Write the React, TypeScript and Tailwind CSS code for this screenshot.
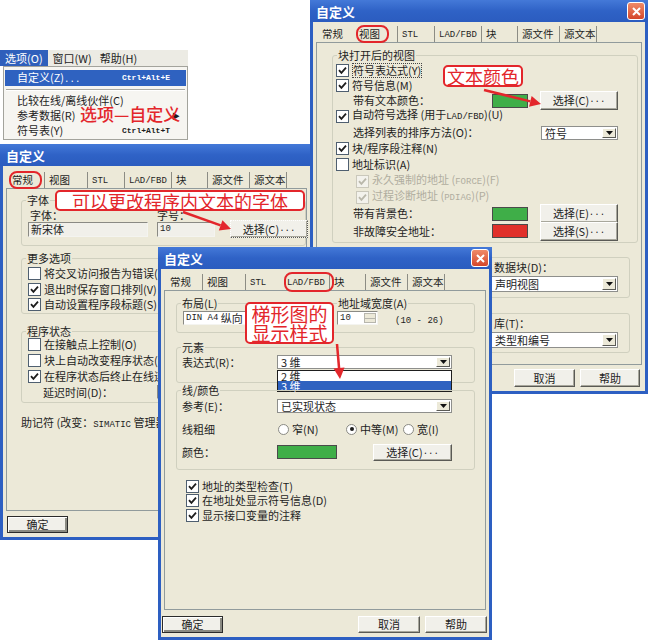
import React from 'react';

type P = { children?: React.ReactNode; className?: string };

const RED = '#e3262b';

// Latin runs in the dialogs look like a bitmap mono face
function M({ children, className = 'text-[9px]' }: P) {
  return <span className={`[font-family:'Liberation_Mono',monospace] ${className}`}>{children}</span>;
}

function TitleBar({ close = false }: { close?: boolean }) {
  return (
    <div className="flex h-[22px] shrink-0 items-center justify-between bg-gradient-to-b from-[#4479d8] via-[#2f62c6] to-[#2b5cbf] pl-[6px] pr-[3px]">
      <span className="text-[13px] font-bold leading-none text-white">自定义</span>
      {close && (
        <span className="flex h-[18px] w-[18px] items-center justify-center rounded-[3px] border border-white bg-gradient-to-b from-[#ef8a68] to-[#d4452a]">
          <svg width="9" height="9" viewBox="0 0 9 9">
            <path d="M1 1L8 8M8 1L1 8" stroke="#fff" strokeWidth="2" />
          </svg>
        </span>
      )}
    </div>
  );
}

const TABS = ['常规', '视图', 'STL', 'LAD/FBD', '块', '源文件', '源文本'];
const TW = ['w-[37px]', 'w-[43px]', 'w-[37px]', 'w-[47px]', 'w-[36px]', 'w-[42px]', 'w-[37px]'];

function Tabs({ sel, className = '' }: { sel: number; className?: string }) {
  return (
    <div className={`flex shrink-0 items-end pl-[5px] text-[10.5px] ${className}`}>
      {TABS.map((t, i) => (
        <div
          key={t}
          className={`flex h-[16px] items-center whitespace-nowrap pl-[4px] ${TW[i]} ${i === sel - 1 ? '' : 'border-r border-[#8c8c84]'}`}
        >
          <span className="relative leading-none">
            {t === 'STL' || t === 'LAD/FBD' ? <M>{t}</M> : t}
            {i === sel && (
              <span className="absolute -bottom-[4px] -left-[3px] -right-[9px] -top-[4px] rounded-[8px] border-2 border-[#e3262b]" />
            )}
          </span>
        </div>
      ))}
    </div>
  );
}

function Group({ label, label2, className = '', children }: P & { label?: string; label2?: React.ReactNode }) {
  return (
    <div className={`relative shrink-0 rounded-[3px] border border-[#d0d0bf] ${className}`}>
      {label && <span className="absolute -top-[7px] left-[4px] bg-[#ece9d8] px-[1px] leading-[13px]">{label}</span>}
      {label2}
      {children}
    </div>
  );
}

function Chk({ on = false, dis = false }: { on?: boolean; dis?: boolean }) {
  return (
    <span
      className={`flex h-[13px] w-[13px] shrink-0 items-center justify-center border ${dis ? 'border-[#cac8bb] bg-[#f3f2ec]' : 'border-[#4f5f70] bg-white'}`}
    >
      {on && (
        <svg width="9" height="9" viewBox="0 0 9 9">
          <path d="M1 4.2L3.4 6.8L8 1.6" fill="none" stroke={dis ? '#b9b7aa' : '#1d1d1d'} strokeWidth="1.8" />
        </svg>
      )}
    </span>
  );
}

function CRow({
  on,
  dis,
  focus,
  children,
  className = '',
}: P & { on?: boolean; dis?: boolean; focus?: boolean }) {
  return (
    <div className={`flex shrink-0 items-center gap-[3px] ${className}`}>
      <Chk on={on} dis={dis} />
      <span
        className={`whitespace-nowrap leading-[13px] ${dis ? 'text-[#b0ad9f]' : ''} ${focus ? 'border border-dotted border-[#444]' : ''}`}
      >
        {children}
      </span>
    </div>
  );
}

function Btn({ children, className = '', def = false }: P & { def?: boolean }) {
  return (
    <div
      className={`flex shrink-0 items-center justify-center whitespace-nowrap border ${def ? 'border-[#2b2b2b] shadow-[inset_1px_1px_0_#fff,inset_-2px_-2px_0_#8a8a82]' : 'border-b-[#5a5a55] border-l-white border-r-[#5a5a55] border-t-white shadow-[inset_-1px_-1px_0_#a8a79c]'} bg-[#f1f0ea] leading-none ${className}`}
    >
      {children}
    </div>
  );
}

function Combo({ value, className = '', pl = 'pl-[3px]', children }: P & { value: string; pl?: string }) {
  return (
    <div className={`relative flex shrink-0 items-center border border-[#8e8f8c] bg-white ${className}`}>
      <span className={`flex-1 whitespace-nowrap leading-[12px] ${pl}`}>{value}</span>
      <span className="m-px flex h-[calc(100%-2px)] w-[14px] items-center justify-center border border-b-[#5a5a55] border-l-white border-r-[#5a5a55] border-t-white bg-[#ece9d8]">
        <svg width="7" height="4" viewBox="0 0 7 4">
          <path d="M0 0H7L3.5 4Z" fill="#111" />
        </svg>
      </span>
      {children}
    </div>
  );
}

function Swatch({ color, className = '' }: { color: string; className?: string }) {
  return <span className={`block h-[14px] shrink-0 border border-[#4a4a4a] ${color} ${className}`} />;
}

function ColorRow({ label, color, btn, className = '' }: { label: string; color: string; btn: string; className?: string }) {
  return (
    <div className={`flex shrink-0 items-center pl-[17px] pr-[19px] ${className}`}>
      <span className="flex-1 leading-none">{label}</span>
      <Swatch color={color} className="w-[36px]" />
      <Btn className="ml-[12px] h-[19px] w-[78px]">
        选择({btn})<M>...</M>
      </Btn>
    </div>
  );
}

function Field({ children, className = '' }: P) {
  return (
    <div
      className={`flex shrink-0 items-center whitespace-nowrap border border-b-[#f4f4f0] border-l-[#8a8a84] border-r-[#f4f4f0] border-t-[#8a8a84] pl-[2px] leading-none ${className}`}
    >
      {children}
    </div>
  );
}

function Radio({ on = false, label, className = '' }: { on?: boolean; label: React.ReactNode; className?: string }) {
  return (
    <div className={`flex shrink-0 items-center gap-[3px] ${className}`}>
      <span className="flex h-[11px] w-[11px] items-center justify-center rounded-full border border-[#8a8a84] bg-white">
        {on && <span className="h-[4px] w-[4px] rounded-full bg-[#1d1d1d]" />}
      </span>
      <span className="whitespace-nowrap leading-none">{label}</span>
    </div>
  );
}

function Arrow({ x1, y1, x2, y2 }: { x1: number; y1: number; x2: number; y2: number }) {
  const a = Math.atan2(y2 - y1, x2 - x1);
  const L = 11;
  const W = 5.5;
  const bx = x2 - L * Math.cos(a);
  const by = y2 - L * Math.sin(a);
  const px = -Math.sin(a) * W;
  const py = Math.cos(a) * W;
  return (
    <g>
      <line x1={x1} y1={y1} x2={bx} y2={by} stroke={RED} strokeWidth="2.5" />
      <polygon points={`${x2},${y2} ${bx + px},${by + py} ${bx - px},${by - py}`} fill={RED} />
    </g>
  );
}

function MenuFragment() {
  return (
    <div className="absolute left-0 top-[50px] w-[188px]">
      <div className="flex h-[16px] items-center bg-[#ecebe4]">
        <span className="flex h-full items-center bg-[#2f5fbb] px-[5px] leading-none text-white">选项(O)</span>
        <span className="ml-[5px] leading-none">窗口(W)</span>
        <span className="ml-[8px] leading-none">帮助(H)</span>
      </div>
      <div className="ml-[3px] h-[74px] border border-[#a3a39c] bg-[#f6f5f1] px-px pt-[3px]">
        <div className="flex h-[16px] items-center justify-between bg-[#2f62c0] pl-[12px] pr-[16px] leading-none text-white">
          <span>
            自定义(Z)<M>...</M>
          </span>
          <M className="text-[8px] font-bold">Ctrl+Alt+E</M>
        </div>
        <div className="mx-px mb-[2px] mt-[3px] h-[2px] border-b border-t border-b-white border-t-[#a9a9a2]" />
        <div className="flex h-[15px] items-center pl-[12px] leading-none">比较在线/离线伙伴(C)</div>
        <div className="flex h-[15px] items-center justify-between pl-[12px] pr-[6px] leading-none">
          <span>参考数据(R)</span>
          <span className="text-[8px]">▶</span>
        </div>
        <div className="flex h-[15px] items-center justify-between pl-[12px] pr-[16px] leading-none">
          <span>符号表(Y)</span>
          <M className="text-[8px] font-bold">Ctrl+Alt+T</M>
        </div>
      </div>
    </div>
  );
}

function ViewDialog() {
  return (
    <div className="absolute left-[310px] top-0 flex h-[394px] w-[338px] flex-col">
      <TitleBar close />
      <div className="flex flex-1 flex-col border-[3px] border-t-0 border-[#2d5fc2] bg-[#ece9d8]">
        <Tabs sel={1} className="h-[20px]" />
        <div className="mx-[3px] flex h-[323px] shrink-0 flex-col border border-[#919b9c] pl-[15px] pr-[3px]">
          <Group label="块打开后的视图" className="mt-[12px] flex h-[188px] flex-col pl-[3px] pt-[6px]">
            <CRow on focus className="h-[16px]">
              符号表达式(Y)
            </CRow>
            <CRow on className="h-[15px]">
              符号信息(M)
            </CRow>
            <ColorRow label="带有文本颜色：" color="bg-[#3fae48]" btn="C" className="h-[15px]" />
            <CRow on className="h-[16px]">
              自动符号选择 (用于<M>LAD/FBD</M>)(U)
            </CRow>
            <div className="flex h-[17px] shrink-0 items-center pl-[17px] pr-[19px]">
              <span className="flex-1 leading-none">选择列表的排序方法(O)：</span>
              <Combo value="符号" className="h-[14px] w-[77px]" />
            </div>
            <CRow on className="h-[15px]">
              块/程序段注释(N)
            </CRow>
            <CRow className="h-[17px]">地址标识(A)</CRow>
            <CRow on dis className="h-[16px] pl-[20px]">
              永久强制的地址 (<M>FORCE</M>)(F)
            </CRow>
            <CRow on dis className="h-[16px] pl-[20px]">
              过程诊断地址 (<M>PDIAG</M>)(P)
            </CRow>
            <ColorRow label="带有背景色：" color="bg-[#3fae48]" btn="E" className="h-[17px]" />
            <ColorRow label="非故障安全地址：" color="bg-[#e1302b]" btn="S" className="h-[18px]" />
          </Group>
          <Group className="mr-[8px] mt-[14px] flex h-[41px] flex-col pt-[2px]">
            <div className="h-[14px] pl-[161px] leading-[14px]">数据块(D)：</div>
            <Combo value="声明视图" pl="pl-[4px]" className="ml-[157px] mr-[11px] mt-[2px] h-[16px]" />
          </Group>
          <Group className="mr-[8px] mt-[15px] flex h-[40px] flex-col pt-[2px]">
            <div className="h-[14px] pl-[161px] leading-[14px]">库(T)：</div>
            <Combo value="类型和编号" pl="pl-[4px]" className="ml-[157px] mr-[11px] mt-[2px] h-[16px]" />
          </Group>
        </div>
        <div className="flex justify-end gap-[5px] pr-[5px] pt-[4px]">
          <Btn className="h-[18px] w-[61px]">取消</Btn>
          <Btn className="h-[18px] w-[60px]">帮助</Btn>
        </div>
      </div>
    </div>
  );
}

function GeneralDialog() {
  return (
    <div className="absolute left-0 top-[144px] flex h-[396px] w-[313px] flex-col">
      <TitleBar />
      <div className="flex flex-1 flex-col border-[3px] border-t-0 border-[#2d5fc2] bg-[#ece9d8]">
        <Tabs sel={0} className="h-[22px]" />
        <div className="mx-[3px] flex h-[323px] shrink-0 flex-col border border-[#919b9c] pl-[14px]">
          <Group label="字体" className="mt-[11px] flex h-[46px] items-end pb-[8px] pl-[6px]">
            <div className="flex flex-col">
              <span className="h-[13px] pl-[2px] leading-[13px]">字体：</span>
              <Field className="h-[15px] w-[120px] bg-[#f1f0ea]">新宋体</Field>
            </div>
            <div className="ml-[9px] flex flex-col">
              <span className="h-[13px] leading-[13px]">字号：</span>
              <Field className="h-[15px] w-[58px] bg-[#f1f0ea]">
                <M>10</M>
              </Field>
            </div>
            <Btn className="mb-[-1px] ml-[15px] h-[18px] w-[78px] border-dotted">
              选择(C)<M>...</M>
            </Btn>
          </Group>
          <Group label="更多选项" className="mt-[12px] flex h-[56px] flex-col pl-[6px] pt-[6px]">
            <CRow className="h-[16px] gap-[2px]">将交叉访问报告为错误(R)</CRow>
            <CRow on className="h-[16px] gap-[2px]">
              退出时保存窗口排列(V)
            </CRow>
            <CRow on className="h-[15px] gap-[2px]">
              自动设置程序段标题(S)
            </CRow>
          </Group>
          <Group label="程序状态" className="mt-[17px] flex h-[72px] flex-col pl-[6px] pt-[4px]">
            <CRow className="h-[16px] gap-[2px]">在接触点上控制(O)</CRow>
            <CRow className="h-[16px] gap-[2px]">块上自动改变程序状态(P)</CRow>
            <CRow on className="h-[16px] gap-[2px]">
              在程序状态后终止在线连接
            </CRow>
            <div className="flex h-[16px] shrink-0 items-center pl-[15px]">
              <span className="w-[114px] leading-none">延迟时间(D)：</span>
              <Field className="h-[14px] w-[40px] bg-white" />
            </div>
          </Group>
          <div className="mt-[12px] whitespace-nowrap leading-[14px]">
            助记符 (改变：<M>SIMATIC</M> 管理器选项)
          </div>
        </div>
        <div className="flex pl-[4px] pt-[5px]">
          <Btn def className="h-[17px] w-[61px]">
            确定
          </Btn>
        </div>
      </div>
    </div>
  );
}

function LadDialog() {
  return (
    <div className="absolute left-[158px] top-[247px] flex h-[393px] w-[334px] flex-col">
      <TitleBar close />
      <div className="flex flex-1 flex-col border-[3px] border-t-0 border-[#2d5fc2] bg-[#ece9d8]">
        <Tabs sel={3} className="h-[21px]" />
        <div className="mx-[3px] flex h-[320px] shrink-0 flex-col border border-[#919b9c] pl-[11px] pr-[10px]">
          <Group
            label="布局(L)"
            label2={
              <span className="absolute -top-[7px] left-[160px] bg-[#ece9d8] px-[1px] leading-[13px]">地址域宽度(A)</span>
            }
            className="mt-[12px] flex h-[30px] items-start pl-[6px] pt-[7px]"
          >
            <Field className="h-[14px] w-[85px] bg-white">
              <M>DIN A4</M>&nbsp;纵向
            </Field>
            <Field className="ml-[69px] h-[14px] w-[41px] justify-between bg-white pr-px">
              <M>10</M>
              <span className="flex h-[10px] w-[12px] flex-col border border-[#b7b6ad] bg-[#ece9d8]">
                <span className="flex-1 border-b border-[#b7b6ad]" />
                <span className="flex-1" />
              </span>
            </Field>
            <span className="ml-[17px] mt-[1px] leading-[13px]">
              <M>(10 - 26)</M>
            </span>
          </Group>
          <Group label="元素" className="mt-[14px] flex h-[36px] items-start pl-[5px] pt-[7px]">
            <span className="w-[95px] leading-[14px]">表达式(R)：</span>
            <Combo value="3 维" className="h-[14px] w-[175px]">
              <div className="absolute left-[-1px] top-[14px] flex w-[175px] flex-col border border-[#1e1e1e] bg-white">
                <span className="h-[10px] pl-[3px] leading-[10px]">2 维</span>
                <span className="h-[10px] bg-[#2f62c0] pl-[3px] leading-[10px] text-white">3 维</span>
              </div>
            </Combo>
          </Group>
          <Group label="线/颜色" className="mt-[7px] flex h-[80px] flex-col pl-[5px] pt-[8px]">
            <div className="flex h-[14px] shrink-0 items-center">
              <span className="w-[95px] leading-none">参考(E)：</span>
              <Combo value="已实现状态" className="h-[14px] w-[175px]" />
            </div>
            <div className="mt-[8px] flex h-[16px] shrink-0 items-center">
              <span className="w-[96px] leading-none">线粗细</span>
              <Radio label="窄(N)" className="w-[68px]" />
              <Radio on label="中等(M)" className="w-[57px]" />
              <Radio label="宽(I)" />
            </div>
            <div className="mt-[6px] flex h-[18px] shrink-0 items-center">
              <span className="w-[95px] leading-none">颜色：</span>
              <Swatch color="bg-[#3fae48]" className="w-[60px]" />
              <Btn className="ml-[36px] h-[17px] w-[79px]">
                选择(C)<M>...</M>
              </Btn>
            </div>
          </Group>
          <div className="ml-[10px] mt-[9px] flex flex-col">
            <CRow on className="h-[14px]">
              地址的类型检查(T)
            </CRow>
            <CRow on className="h-[15px]">
              在地址处显示符号信息(D)
            </CRow>
            <CRow on className="h-[15px]">
              显示接口变量的注释
            </CRow>
          </div>
        </div>
        <div className="flex items-start pl-px pt-[6px]">
          <Btn def className="h-[17px] w-[61px]">
            确定
          </Btn>
          <Btn className="ml-[135px] h-[17px] w-[62px]">取消</Btn>
          <Btn className="ml-[5px] h-[17px] w-[62px]">帮助</Btn>
        </div>
      </div>
    </div>
  );
}

export default function App() {
  return (
    <div className="relative h-[640px] w-[648px] overflow-hidden bg-white text-[11px] text-[#1e1e1e] [font-family:'Noto_Sans_CJK_SC',sans-serif]">
      <MenuFragment />
      <div className="absolute left-[80px] top-[104px] text-[17px] font-medium leading-[20px] text-[#e3262b]">选项—自定义</div>

      <GeneralDialog />
      <ViewDialog />
      <LadDialog />

      {/* annotations */}
      <div className="absolute left-[55px] top-[190px] flex h-[21px] w-[250px] items-center justify-center rounded-[5px] border-2 border-[#e3262b] bg-white text-[18px] leading-none text-[#e3262b]">
        可以更改程序内文本的字体
      </div>
      <div className="absolute left-[443px] top-[65px] flex h-[22px] w-[80px] items-center justify-center rounded-[5px] border-2 border-[#e3262b] bg-white text-[18px] leading-none text-[#e3262b]">
        文本颜色
      </div>
      <div className="absolute left-[245px] top-[302px] flex h-[42px] w-[89px] flex-col items-center justify-center rounded-[5px] border-2 border-[#e3262b] bg-white text-[19px] leading-[19px] text-[#e3262b]">
        <span>梯形图的</span>
        <span>显示样式</span>
      </div>
      <svg className="pointer-events-none absolute left-0 top-0" width="648" height="640">
        <Arrow x1={183} y1={212} x2={231} y2={229} />
        <Arrow x1={484} y1={90} x2={541} y2={104} />
        <Arrow x1={337} y1={344} x2={340} y2={379} />
      </svg>
    </div>
  );
}
